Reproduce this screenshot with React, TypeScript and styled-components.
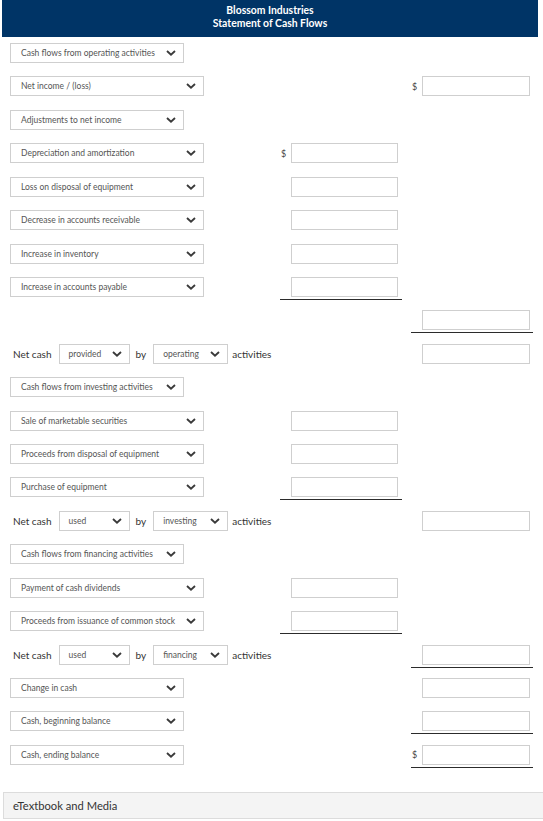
import React from 'react';
import styled, { createGlobalStyle } from 'styled-components';

const GlobalStyle = createGlobalStyle`
  body {
    margin: 0;
    background: #fff;
    font-family: Lato, 'Liberation Sans', sans-serif;
  }
`;

const Page = styled.div`
  width: 543px;
`;

const Sheet = styled.div`
  margin-left: 2px;
  width: 536px;
`;

const Header = styled.div`
  background: #003466;
  color: #fff;
  text-align: center;
  font-weight: 700;
  font-size: 10.4px;
  line-height: 13px;
  padding: 4px 0 7px;
`;

const Rows = styled.div`
  display: flex;
  flex-direction: column;
  gap: 13.43px;
  padding: 6px 0 0 8px;
`;

const Row = styled.div`
  display: grid;
  grid-template-columns: 270px 122px 9px 122px;
  grid-template-rows: 20px;
  align-items: start;
`;

const LabelCell = styled.div`
  grid-column: 1;
  display: flex;
  align-items: center;
  height: 20px;
`;

const Select = styled.div<{ $w: number; $pl?: number }>`
  box-sizing: border-box;
  width: ${(p) => p.$w}px;
  height: 20px;
  border: 1px solid #cfcfcf;
  background: #fff;
  display: flex;
  align-items: center;
  justify-content: space-between;
  padding: 0 7px 0 ${(p) => p.$pl ?? 10}px;
  font-size: 8.5px;
  color: #555;
  white-space: nowrap;
`;

const NetCashLine = styled.div`
  display: flex;
  align-items: center;
  padding-left: 3px;
  font-size: 10px;
  color: #333;
  white-space: nowrap;
`;

const Word = styled.span<{ $ml?: number; $mr?: number }>`
  margin-left: ${(p) => p.$ml ?? 0}px;
  margin-right: ${(p) => p.$mr ?? 0}px;
`;

const AmountCell = styled.div<{ $col: number; $line?: boolean }>`
  grid-column: ${(p) => p.$col};
  display: flex;
  align-items: center;
  padding-bottom: ${(p) => (p.$line ? '2px' : '0')};
  border-bottom: ${(p) => (p.$line ? '1.5px solid #2b2b2b' : 'none')};
`;

const Dollar = styled.span`
  width: 11px;
  box-sizing: border-box;
  padding-left: 1px;
  font-size: 9px;
  color: #444;
`;

const Input = styled.div<{ $w: number }>`
  box-sizing: border-box;
  width: ${(p) => p.$w}px;
  height: 20px;
  border: 1px solid #cfcfcf;
  background: #fff;
`;

const MediaBar = styled.div`
  margin: 27px 0 0 3px;
  box-sizing: border-box;
  height: 27px;
  border: 1px solid #dcdcdc;
  border-right: none;
  background: #f4f4f4;
  display: flex;
  align-items: center;
  padding-left: 9px;
  font-size: 11.2px;
  color: #333;
`;

const Chevron = () => (
  <svg width="10" height="6" viewBox="0 0 10 6">
    <path d="M1 1 L5 4.6 L9 1" fill="none" stroke="#3a3a3a" strokeWidth="1.9" />
  </svg>
);

type Amount = { col: 2 | 4; dollar?: boolean; line?: boolean };

type Line =
  | { kind: 'select'; text: string; wide: boolean; amount?: Amount }
  | { kind: 'net'; how: string; what: string; amount: Amount }
  | { kind: 'blank'; amount: Amount };

const lines: Line[] = [
  { kind: 'select', text: 'Cash flows from operating activities', wide: false },
  { kind: 'select', text: 'Net income / (loss)', wide: true, amount: { col: 4, dollar: true } },
  { kind: 'select', text: 'Adjustments to net income', wide: false },
  { kind: 'select', text: 'Depreciation and amortization', wide: true, amount: { col: 2, dollar: true } },
  { kind: 'select', text: 'Loss on disposal of equipment', wide: true, amount: { col: 2 } },
  { kind: 'select', text: 'Decrease in accounts receivable', wide: true, amount: { col: 2 } },
  { kind: 'select', text: 'Increase in inventory', wide: true, amount: { col: 2 } },
  { kind: 'select', text: 'Increase in accounts payable', wide: true, amount: { col: 2, line: true } },
  { kind: 'blank', amount: { col: 4, line: true } },
  { kind: 'net', how: 'provided', what: 'operating', amount: { col: 4 } },
  { kind: 'select', text: 'Cash flows from investing activities', wide: false },
  { kind: 'select', text: 'Sale of marketable securities', wide: true, amount: { col: 2 } },
  { kind: 'select', text: 'Proceeds from disposal of equipment', wide: true, amount: { col: 2 } },
  { kind: 'select', text: 'Purchase of equipment', wide: true, amount: { col: 2, line: true } },
  { kind: 'net', how: 'used', what: 'investing', amount: { col: 4 } },
  { kind: 'select', text: 'Cash flows from financing activities', wide: false },
  { kind: 'select', text: 'Payment of cash dividends', wide: true, amount: { col: 2 } },
  { kind: 'select', text: 'Proceeds from issuance of common stock', wide: true, amount: { col: 2, line: true } },
  { kind: 'net', how: 'used', what: 'financing', amount: { col: 4, line: true } },
  { kind: 'select', text: 'Change in cash', wide: false, amount: { col: 4 } },
  { kind: 'select', text: 'Cash, beginning balance', wide: false, amount: { col: 4, line: true } },
  { kind: 'select', text: 'Cash, ending balance', wide: false, amount: { col: 4, dollar: true, line: true } },
];

const renderAmount = (amount?: Amount) => {
  if (!amount) {
    return null;
  }
  return (
    <AmountCell $col={amount.col} $line={amount.line}>
      <Dollar>{amount.dollar ? '$' : ''}</Dollar>
      <Input $w={amount.col === 4 ? 108 : 107} />
    </AmountCell>
  );
};

const renderLabel = (line: Line) => {
  if (line.kind === 'select') {
    return (
      <Select $w={line.wide ? 194 : 174}>
        <span>{line.text}</span>
        <Chevron />
      </Select>
    );
  }
  if (line.kind === 'net') {
    return (
      <NetCashLine>
        <Word $mr={7}>Net cash</Word>
        <Select $w={71} $pl={9}>
          <span>{line.how}</span>
          <Chevron />
        </Select>
        <Word $ml={6} $mr={7}>by</Word>
        <Select $w={75} $pl={9}>
          <span>{line.what}</span>
          <Chevron />
        </Select>
        <Word $ml={4}>activities</Word>
      </NetCashLine>
    );
  }
  return null;
};

const App: React.FC = () => {
  return (
    <Page>
      <GlobalStyle />
      <Sheet>
        <Header>
          <div>Blossom Industries</div>
          <div>Statement of Cash Flows</div>
        </Header>
        <Rows>
          {lines.map((line, i) => (
            <Row key={i}>
              <LabelCell>{renderLabel(line)}</LabelCell>
              {renderAmount(line.amount)}
            </Row>
          ))}
        </Rows>
      </Sheet>
      <MediaBar>eTextbook and Media</MediaBar>
    </Page>
  );
};

export default App;
